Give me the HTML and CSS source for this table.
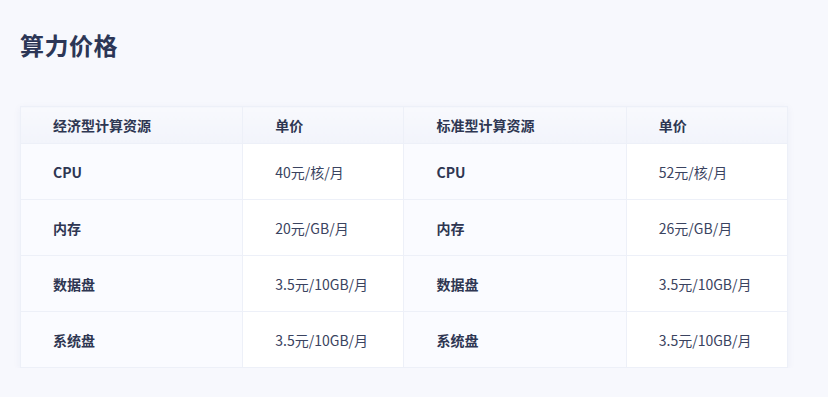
FILE: index.html
```html
<!DOCTYPE html>
<html lang="zh-CN">
<head>
<meta charset="utf-8">
<link rel="stylesheet" href="styles.css">
</head>
<body>
<div class="page">
  <h1 class="title">算力价格</h1>
  <table class="price-table">
    <colgroup>
      <col class="c-name"><col class="c-price"><col class="c-name"><col class="c-price">
    </colgroup>
    <thead>
      <tr><th>经济型计算资源</th><th>单价</th><th>标准型计算资源</th><th>单价</th></tr>
    </thead>
    <tbody>
      <tr><td class="name">CPU</td><td class="price">40元/核/月</td><td class="name">CPU</td><td class="price">52元/核/月</td></tr>
      <tr><td class="name">内存</td><td class="price">20元/GB/月</td><td class="name">内存</td><td class="price">26元/GB/月</td></tr>
      <tr><td class="name">数据盘</td><td class="price">3.5元/10GB/月</td><td class="name">数据盘</td><td class="price">3.5元/10GB/月</td></tr>
      <tr><td class="name">系统盘</td><td class="price">3.5元/10GB/月</td><td class="name">系统盘</td><td class="price">3.5元/10GB/月</td></tr>
    </tbody>
  </table>
</div>
</body>
</html>
```

FILE: styles.css
```css
html, body {
  margin: 0;
  padding: 0;
  background: #f7f8fd;
  font-family: "Noto Sans CJK SC", "Noto Sans", sans-serif;
}
.page {
  padding: 26px 0 0 20px;
  width: 768px;
}
.title {
  margin: 0;
  font-size: 24px;
  line-height: 37px;
  font-weight: 700;
  color: #2c3656;
  height: 37px;
  letter-spacing: 0.5px;
}
.price-table {
  margin-top: 43px;
  width: 768px;
  border-collapse: collapse;
  table-layout: fixed;
  background: #fff;
  box-shadow: 0 2px 8px rgba(40, 60, 140, 0.05);
  border: 1px solid #e9ecf5;
}
.c-name { width: 222px; }
.c-price { width: 161px; }
th, td {
  text-align: left;
  padding: 0 0 0 32px;
  font-size: 14px;
  border: 1px solid #edf0f8;
}
th {
  height: 36px;
  font-weight: 700;
  color: #2e3652;
  background: linear-gradient(#f8f9fd, #f2f4fb);
}
td {
  height: 55px;
}
td.name {
  background: #fafbff;
  font-weight: 700;
  color: #2e3652;
}
td.price {
  background: #fff;
  color: #3a4360;
}
```
